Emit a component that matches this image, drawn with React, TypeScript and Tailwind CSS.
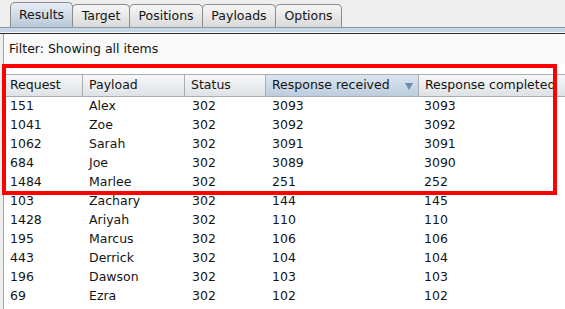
import React from "react";

type Row = {
  request: string;
  payload: string;
  status: string;
  received: string;
  completed: string;
};

const rows: Row[] = [
  { request: "151", payload: "Alex", status: "302", received: "3093", completed: "3093" },
  { request: "1041", payload: "Zoe", status: "302", received: "3092", completed: "3092" },
  { request: "1062", payload: "Sarah", status: "302", received: "3091", completed: "3091" },
  { request: "684", payload: "Joe", status: "302", received: "3089", completed: "3090" },
  { request: "1484", payload: "Marlee", status: "302", received: "251", completed: "252" },
  { request: "103", payload: "Zachary", status: "302", received: "144", completed: "145" },
  { request: "1428", payload: "Ariyah", status: "302", received: "110", completed: "110" },
  { request: "195", payload: "Marcus", status: "302", received: "106", completed: "106" },
  { request: "443", payload: "Derrick", status: "302", received: "104", completed: "104" },
  { request: "196", payload: "Dawson", status: "302", received: "103", completed: "103" },
  { request: "69", payload: "Ezra", status: "302", received: "102", completed: "102" },
];

const tabs = [
  { label: "Results", width: "w-[63px]" },
  { label: "Target", width: "w-[58px]" },
  { label: "Positions", width: "w-[74px]" },
  { label: "Payloads", width: "w-[74px]" },
  { label: "Options", width: "w-[67px]" },
];

const cols = "grid grid-cols-[79px_102px_81px_153px_1fr]";

const HeaderCell: React.FC<{ label: string; sorted?: boolean; last?: boolean }> = ({ label, sorted, last }) => (
  <div
    className={
      "relative flex items-center pl-[6px] whitespace-nowrap overflow-hidden " +
      (last ? "" : "border-r border-[#a9adb2] ") +
      (sorted ? "bg-gradient-to-b from-[#dbe5ef] to-[#bccddd]" : "bg-gradient-to-b from-[#f6f7f8] to-[#dfe2e5]")
    }
  >
    {label}
    {sorted && (
      <svg className="absolute right-[5px] top-[8px]" width="8" height="7" viewBox="0 0 8 7">
        <polygon points="0,0 8,0 4,7" fill="#6d8db0" />
      </svg>
    )}
  </div>
);

const App: React.FC = () => {
  return (
    <div
      className="relative w-[565px] h-[309px] overflow-hidden bg-[#eeeeee] text-[12.5px] text-[#141414]"
      style={{ fontFamily: '"DejaVu Sans", Verdana, sans-serif' }}
    >
      {/* tab strip */}
      <div className="flex items-end h-[27px] pl-[10px]">
        {tabs.map((t, i) => (
          <div
            key={t.label}
            className={
              t.width +
              " flex items-center justify-center border border-b-0 border-[#8c8c8c] rounded-t-[5px] " +
              (i === 0
                ? "h-[25px] bg-gradient-to-b from-[#e8eef5] to-[#b8c9da]"
                : "h-[23px] -ml-px bg-gradient-to-b from-[#f6f6f6] to-[#dadada]")
            }
          >
            {t.label}
          </div>
        ))}
      </div>
      <div className="h-px bg-[#8e99a6]" />
      <div className="h-[4px] bg-[#c6d6e7]" />
      <div className="h-px bg-[#f4f4f4]" />
      <div className="h-px bg-[#2e2e2e]" />

      {/* filter bar */}
      <div className="ml-[3px] h-[30px] border-l border-[#a3a3a3] bg-[#f9f9f9] flex items-center pl-[5px]">
        Filter: Showing all items
      </div>

      {/* results table */}
      <div className="ml-[3px] border-l border-[#a3a3a3] bg-white h-[250px]">
        <div className="h-[10px]" />
        <div className={cols + " h-[23px] border-t border-b border-[#a9adb2]"}>
          <HeaderCell label="Request" />
          <HeaderCell label="Payload" />
          <HeaderCell label="Status" />
          <HeaderCell label="Response received" sorted />
          <HeaderCell label="Response completed" last />
        </div>
        {rows.map((r) => (
          <div key={r.request} className={cols + " h-[19px] items-center"}>
            <div className="pl-[6px]">{r.request}</div>
            <div className="pl-[6px]">{r.payload}</div>
            <div className="pl-[7px]">{r.status}</div>
            <div className="pl-[6px]">{r.received}</div>
            <div className="pl-[5px]">{r.completed}</div>
          </div>
        ))}
      </div>

      {/* highlight box */}
      <div className="absolute left-[2px] top-[64px] w-[555px] h-[131px] border-4 border-[#ff0000] pointer-events-none" />
    </div>
  );
};

export default App;
